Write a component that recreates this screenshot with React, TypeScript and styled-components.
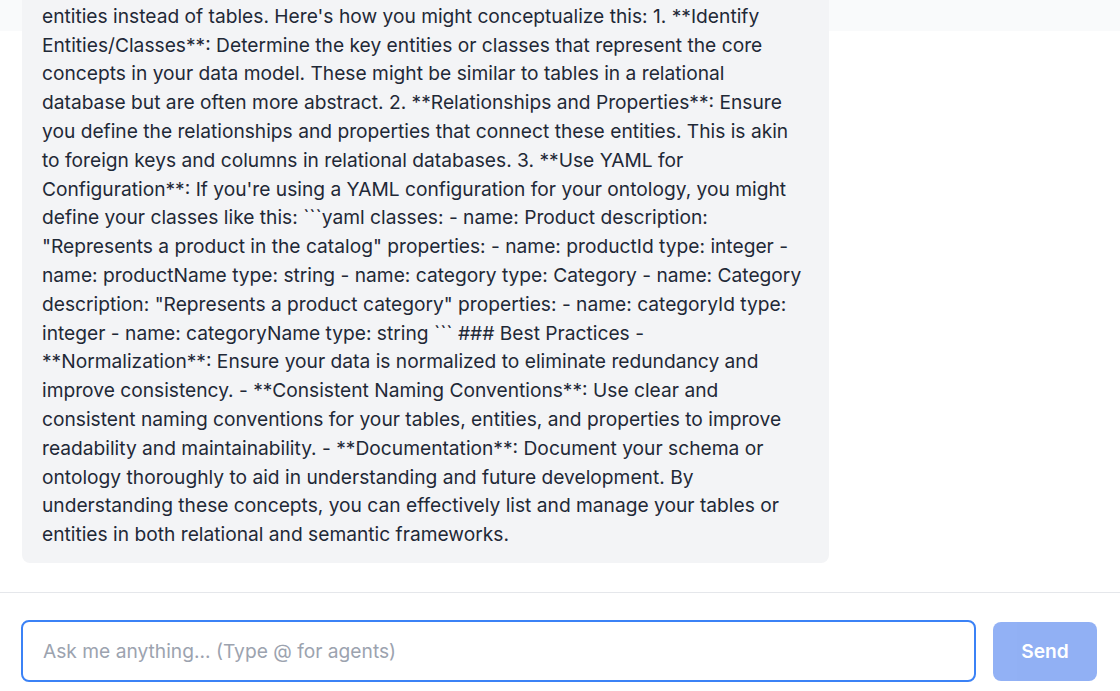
import React from "react";
import styled, { createGlobalStyle } from "styled-components";

const GlobalStyle = createGlobalStyle`
  html, body {
    margin: 0;
    padding: 0;
    height: 100%;
    background: #ffffff;
    font-family: Inter, "Noto Sans", "Liberation Sans", sans-serif;
  }
  #root {
    height: 100%;
  }
  * {
    box-sizing: border-box;
  }
`;

const Page = styled.div`
  display: flex;
  flex-direction: column;
  height: 691px;
  overflow: hidden;
  background: #ffffff;
`;

const Messages = styled.div`
  flex: 1;
  min-height: 0;
  overflow: hidden;
  display: flex;
  flex-direction: column;
  justify-content: flex-end;
  padding: 0 22px 29px 22px;
  background: linear-gradient(#f9fafb 0, #f9fafb 31px, #ffffff 31px);
`;

const Bubble = styled.div`
  flex-shrink: 0;
  width: 807px;
  background: #f3f4f6;
  border-radius: 8px;
  padding: 14px 20px 14px 20px;
  color: #1f2937;
  font-size: 19.2px;
  line-height: 28.8px;
`;

const Line = styled.span`
  display: block;
  white-space: nowrap;
`;

const Footer = styled.form`
  flex-shrink: 0;
  display: flex;
  align-items: center;
  gap: 17px;
  border-top: 1px solid #e5e7eb;
  padding: 27px 23px 9px 21px;
`;

const Input = styled.input`
  flex: 1;
  height: 62px;
  border: 2px solid #3b82f6;
  border-radius: 8px;
  padding: 0 20px;
  font-family: Inter, "Noto Sans", "Liberation Sans", sans-serif;
  font-size: 19.2px;
  color: #1f2937;
  caret-color: #111827;
  background: #ffffff;
  outline: none;
  &::placeholder {
    color: #9ca3af;
  }
`;

const SendButton = styled.button`
  width: 104px;
  height: 59px;
  border: none;
  border-radius: 8px;
  background: #2563eb;
  opacity: 0.5;
  color: #ffffff;
  font-family: Inter, "Noto Sans", "Liberation Sans", sans-serif;
  font-size: 19.2px;
  font-weight: 600;
  cursor: not-allowed;
`;

const lines = [
  "entities instead of tables. Here's how you might conceptualize this: 1. **Identify",
  "Entities/Classes**: Determine the key entities or classes that represent the core",
  "concepts in your data model. These might be similar to tables in a relational",
  "database but are often more abstract. 2. **Relationships and Properties**: Ensure",
  "you define the relationships and properties that connect these entities. This is akin",
  "to foreign keys and columns in relational databases. 3. **Use YAML for",
  "Configuration**: If you're using a YAML configuration for your ontology, you might",
  "define your classes like this: ```yaml classes: - name: Product description:",
  "\"Represents a product in the catalog\" properties: - name: productId type: integer -",
  "name: productName type: string - name: category type: Category - name: Category",
  "description: \"Represents a product category\" properties: - name: categoryId type:",
  "integer - name: categoryName type: string ``` ### Best Practices -",
  "**Normalization**: Ensure your data is normalized to eliminate redundancy and",
  "improve consistency. - **Consistent Naming Conventions**: Use clear and",
  "consistent naming conventions for your tables, entities, and properties to improve",
  "readability and maintainability. - **Documentation**: Document your schema or",
  "ontology thoroughly to aid in understanding and future development. By",
  "understanding these concepts, you can effectively list and manage your tables or",
  "entities in both relational and semantic frameworks.",
];

export default function App() {
  return (
    <>
      <GlobalStyle />
      <Page>
        <Messages>
          <Bubble>
            {lines.map((l, i) => (
              <Line key={i}>{l} </Line>
            ))}
          </Bubble>
        </Messages>
        <Footer onSubmit={(e) => e.preventDefault()}>
          <Input placeholder="Ask me anything... (Type @ for agents)" autoFocus />
          <SendButton type="submit" disabled>
            Send
          </SendButton>
        </Footer>
      </Page>
    </>
  );
}
